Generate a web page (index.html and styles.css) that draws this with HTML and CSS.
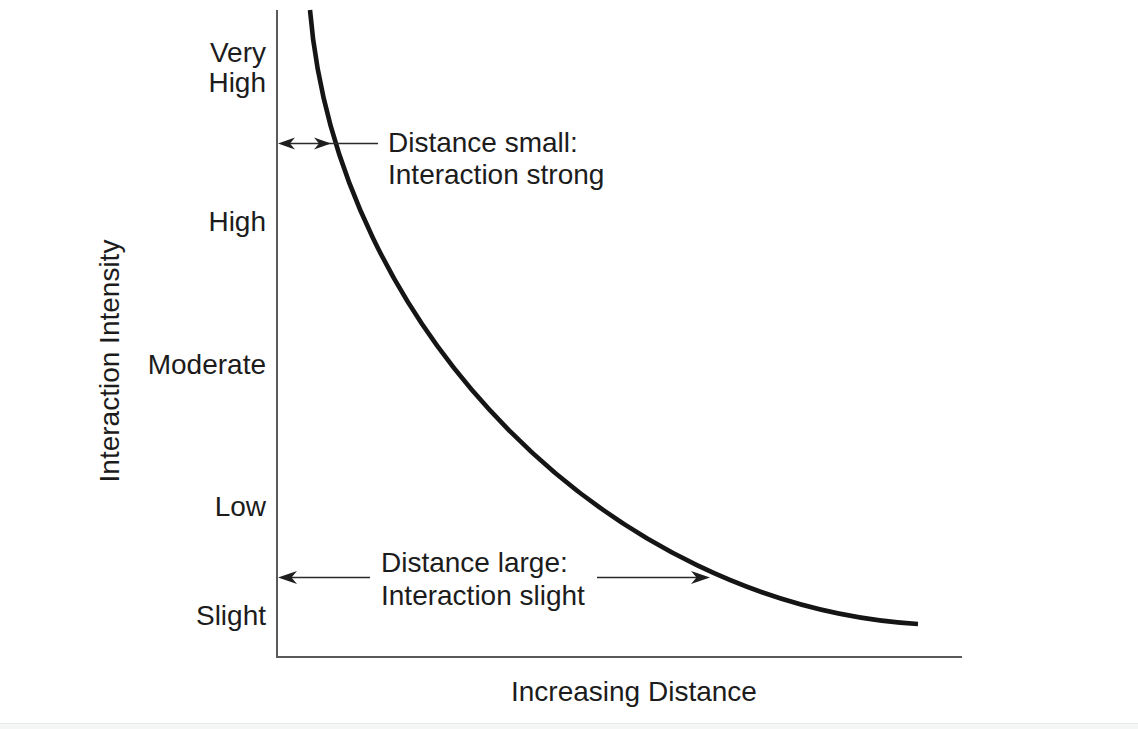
FILE: index.html
```html
<!DOCTYPE html>
<html lang="en">
<head>
<meta charset="utf-8">
<title>Distance decay: interaction intensity vs distance</title>
<link rel="stylesheet" href="styles.css">
</head>
<body>
<div class="page">
  <div class="chart">
    <svg class="plot" width="1138" height="723" viewBox="0 0 1138 723" aria-hidden="true">
      <line class="axis" x1="277" y1="10" x2="277" y2="658"/>
      <line class="axis" x1="276" y1="657" x2="962" y2="657"/>
      <path class="curve" d="M310,10 C336.6,329.2 610.2,605.5 918,624"/>
      <line class="lead" x1="284" y1="143.5" x2="378" y2="143.5"/>
      <path class="head" d="M278,143.5 L295,137.5 L290,143.5 L295,149.5 Z"/>
      <path class="head" d="M331,143.5 L314,137.5 L319,143.5 L314,149.5 Z"/>
      <line class="lead" x1="284" y1="577.5" x2="370" y2="577.5"/>
      <path class="head" d="M278,577.5 L297,571 L291.5,577.5 L297,584 Z"/>
      <line class="lead" x1="597" y1="577.5" x2="702" y2="577.5"/>
      <path class="head" d="M710,577.5 L691,571 L696.5,577.5 L691,584 Z"/>
    </svg>
    <div class="ylabel">Interaction Intensity</div>
    <div class="tick t-vhigh">Very<br>High</div>
    <div class="tick t-high">High</div>
    <div class="tick t-mod">Moderate</div>
    <div class="tick t-low">Low</div>
    <div class="tick t-slight">Slight</div>
    <div class="note note-small">Distance small:<br>Interaction strong</div>
    <div class="note note-large">Distance large:<br>Interaction slight</div>
    <div class="xlabel">Increasing Distance</div>
  </div>
  <div class="footer"></div>
</div>
</body>
</html>
```

FILE: styles.css
```css
html, body {
  margin: 0;
  padding: 0;
  background: #ffffff;
}

.page {
  width: 1138px;
  height: 729px;
  display: flex;
  flex-direction: column;
  overflow: hidden;
  font-family: "Liberation Sans", Arial, Helvetica, sans-serif;
  font-size: 28px;
  color: #1c1c1c;
}

.chart {
  position: relative;
  height: 723px;
  flex: 0 0 auto;
}

.plot {
  position: absolute;
  left: 0;
  top: 0;
  display: block;
}

.axis {
  stroke: #5a5a5a;
  stroke-width: 2;
}

.curve {
  fill: none;
  stroke: #151515;
  stroke-width: 4.6;
}

.lead {
  stroke: #2a2a2a;
  stroke-width: 1.6;
}

.head {
  fill: #1e1e1e;
}

.tick {
  position: absolute;
  left: 0;
  width: 266px;
  text-align: right;
  line-height: 30px;
  white-space: nowrap;
}

.t-vhigh { top: 38px; }
.t-high { top: 207px; }
.t-mod { top: 350px; }
.t-low { top: 492px; }
.t-slight { top: 601px; }

.ylabel {
  position: absolute;
  left: 110px;
  top: 361px;
  line-height: 30px;
  white-space: nowrap;
  transform: translate(-50%, -50%) rotate(-90deg);
}

.note {
  position: absolute;
  white-space: nowrap;
}

.note-small {
  left: 388px;
  top: 127px;
  line-height: 32px;
}

.note-large {
  left: 381px;
  top: 546px;
  line-height: 33px;
}

.xlabel {
  position: absolute;
  left: 511px;
  top: 677px;
  line-height: 30px;
  white-space: nowrap;
}

.footer {
  flex: 1 1 auto;
  background: #f4f5f5;
  border-top: 1px solid #e9ecec;
}
```
